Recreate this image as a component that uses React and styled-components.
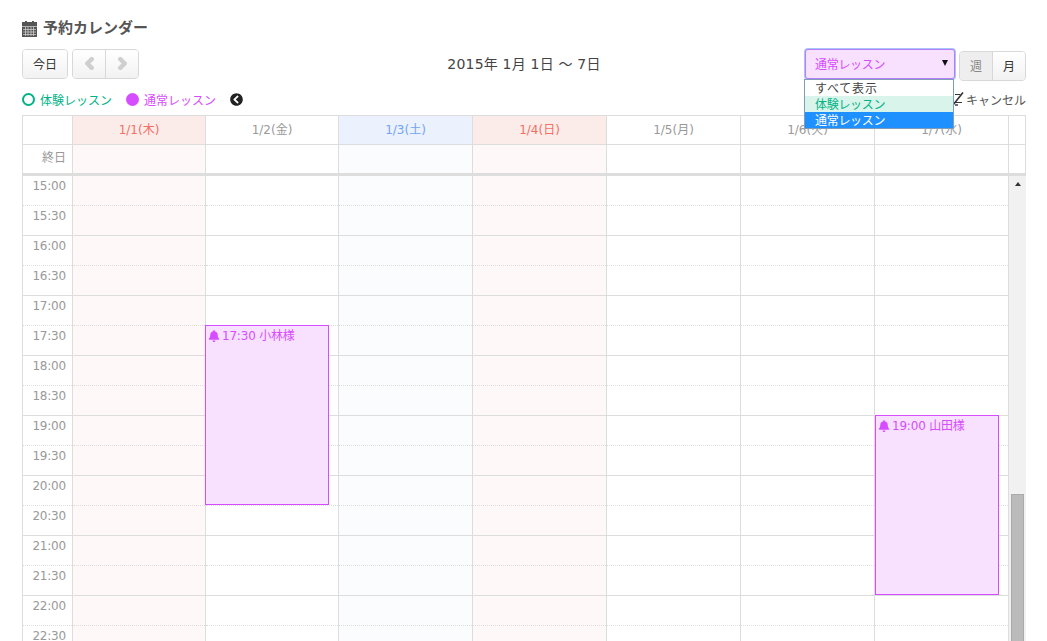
import React from 'react';
import styled, { createGlobalStyle } from 'styled-components';
import { FaBell, FaChevronCircleLeft, FaChevronLeft, FaChevronRight } from 'react-icons/fa';

const PURPLE = '#d64dff';
const GREEN = '#00b386';
const LINE = '#dddddd';

const GlobalStyle = createGlobalStyle`
  html, body {
    margin: 0;
    padding: 0;
    background: #fff;
  }
  body {
    font-family: 'DejaVu Sans', 'Noto Sans CJK JP', sans-serif;
    font-size: 12px;
    color: #444;
  }
`;

const Page = styled.div`
  height: 100vh;
  overflow: hidden;
  padding: 18px 21px 0 22px;
  box-sizing: border-box;
`;

const Title = styled.h1`
  display: flex;
  align-items: center;
  gap: 6px;
  margin: 0;
  height: 21px;
  font-size: 15px;
  line-height: 21px;
  font-weight: 700;
  color: #555;
`;

const Toolbar = styled.div`
  display: grid;
  grid-template-columns: 1fr auto 1fr;
  align-items: flex-start;
  height: 32px;
  margin-top: 10px;
`;

const ButtonRow = styled.div`
  display: flex;
  gap: 4px;
`;

const RightTools = styled(ButtonRow)`
  justify-content: flex-end;
`;

const ButtonGroup = styled.div`
  display: flex;
  margin-top: ${(p) => p.$top || 0}px;
  border: 1px solid #d8d8d8;
  border-radius: 4px;
  overflow: hidden;
`;

const Button = styled.div`
  display: flex;
  align-items: center;
  justify-content: center;
  box-sizing: border-box;
  width: ${(p) => p.$w}px;
  height: 28px;
  padding-bottom: 2px;
  font-size: 12px;
  color: ${(p) => (p.$active ? '#888' : '#333')};
  background: ${(p) => (p.$active ? '#eeeeee' : 'linear-gradient(#ffffff, #f2f2f2)')};
  & + & {
    border-left: 1px solid #d8d8d8;
  }
  svg {
    color: #cfcfcf;
    font-size: 13px;
    stroke: currentColor;
    stroke-width: 90;
  }
`;

const RangeLabel = styled.div`
  padding-top: 1px;
  font-size: 14px;
  line-height: 28px;
  letter-spacing: 0.2px;
  color: #444;
`;

const SelectWrap = styled.div`
  position: relative;
  width: 150px;
`;

const SelectBox = styled.div`
  display: flex;
  align-items: center;
  justify-content: space-between;
  box-sizing: border-box;
  height: 30px;
  padding: 0 6px 2px 9px;
  border: 1px solid #b47ff5;
  border-radius: 3px;
  box-shadow: 0 0 0 1px #a9c4fb;
  background: #f7e1ff;
  color: ${PURPLE};
  font-size: 12px;
  letter-spacing: -0.3px;
`;

const Caret = styled.span`
  width: 0;
  height: 0;
  border-left: 3.5px solid transparent;
  border-right: 3.5px solid transparent;
  border-top: 6px solid #111;
`;

const OptionList = styled.div`
  position: absolute;
  z-index: 5;
  top: 30px;
  left: -1px;
  width: 150px;
  box-sizing: border-box;
  border: 1px solid #7f9db9;
  background: #fff;
`;

const Option = styled.div`
  height: 16px;
  padding-left: 10px;
  font-size: 12px;
  line-height: 18px;
  overflow: hidden;
  letter-spacing: ${(p) => p.$tracking || '-0.3px'};
  color: ${(p) => p.$color};
  background: ${(p) => p.$bg};
`;

const LegendRow = styled.div`
  display: flex;
  align-items: center;
  height: 20px;
  margin-top: 8px;
  font-size: 12px;
`;

const LegendItem = styled.span`
  display: flex;
  align-items: center;
  gap: 5px;
  margin-right: 14px;
  color: ${(p) => p.$color};
`;

const Dot = styled.i`
  box-sizing: border-box;
  width: 13px;
  height: 13px;
  border-radius: 50%;
  border: ${(p) => (p.$filled ? 'none' : `2px solid ${p.$color}`)};
  background: ${(p) => (p.$filled ? p.$color : 'transparent')};
`;

const Collapse = styled.span`
  display: flex;
  font-size: 13px;
  color: #222;
`;

const CancelLabel = styled.span`
  display: flex;
  align-items: center;
  gap: 2px;
  margin-left: auto;
  color: #555;
`;

const Grid = styled.div`
  display: grid;
  grid-template-columns: 50px repeat(2, 133px) repeat(5, 134px) 18px;
  width: 1004px;
  box-sizing: border-box;
`;

const HeadGrid = styled(Grid)`
  margin-top: 6px;
  border-top: 1px solid ${LINE};
  border-bottom: 3px solid ${LINE};
`;

const tones = {
  red: { head: '#fbecea', body: '#fef9f8', text: '#f26f64' },
  blue: { head: '#ebf1fd', body: '#fbfcfe', text: '#72a4f2' },
  plain: { head: '#fff', body: '#fff', text: '#999' },
};

const HeadCell = styled.div`
  box-sizing: border-box;
  height: 28px;
  border-left: 1px solid ${LINE};
  border-right: ${(p) => (p.$last ? `1px solid ${LINE}` : '0')};
  background: ${(p) => tones[p.$tone].head};
  color: ${(p) => tones[p.$tone].text};
  font-size: 12px;
  line-height: 28px;
  text-align: center;
`;

const AllDayCell = styled.div`
  box-sizing: border-box;
  height: 29px;
  border-top: 1px solid ${LINE};
  border-left: 1px solid ${LINE};
  border-right: ${(p) => (p.$last ? `1px solid ${LINE}` : '0')};
  background: ${(p) => tones[p.$tone].body};
  color: #999;
  font-size: 12px;
  line-height: 26px;
  padding-right: ${(p) => (p.$label ? 6 : 0)}px;
  text-align: right;
`;

const TimeColumn = styled.div`
  border-left: 1px solid ${LINE};
`;

const DayColumn = styled.div`
  position: relative;
  border-left: 1px solid ${LINE};
  background: ${(p) => tones[p.$tone].body};
`;

const Slot = styled.div`
  box-sizing: border-box;
  height: 30px;
  border-bottom: 1px ${(p) => (p.$half ? 'dotted' : 'solid')} ${LINE};
`;

const TimeSlot = styled(Slot)`
  padding: 1px 6px 0 0;
  color: #999;
  font-size: 12px;
  line-height: 18px;
  letter-spacing: -0.2px;
  text-align: right;
`;

const Event = styled.div`
  position: absolute;
  z-index: 2;
  top: ${(p) => p.$top}px;
  left: ${(p) => p.$left}px;
  box-sizing: border-box;
  display: flex;
  align-items: flex-start;
  gap: 2px;
  width: 124px;
  height: 180px;
  padding: 1px 2px;
  border: 1px solid ${PURPLE};
  background: #f7e1ff;
  color: ${PURPLE};
  font-size: 12px;
  line-height: 18px;
  letter-spacing: -0.2px;
  svg {
    flex: none;
    margin-top: 3px;
    font-size: 12px;
  }
`;

const Scrollbar = styled.div`
  position: relative;
  border-left: 1px solid ${LINE};
  background: #f1f1f1;
`;

const ScrollArrow = styled.span`
  position: absolute;
  top: 6px;
  left: 6px;
  width: 0;
  height: 0;
  border-left: 3.5px solid transparent;
  border-right: 3.5px solid transparent;
  border-bottom: 4px solid #333;
`;

const ScrollThumb = styled.div`
  position: absolute;
  top: 318px;
  left: 2px;
  width: 13px;
  height: 400px;
  box-sizing: border-box;
  border: 1px solid #aaa;
  background: #bbb;
`;

const days = [
  { label: '1/1(木)', tone: 'red' },
  { label: '1/2(金)', tone: 'plain' },
  { label: '1/3(土)', tone: 'blue' },
  { label: '1/4(日)', tone: 'red' },
  { label: '1/5(月)', tone: 'plain' },
  { label: '1/6(火)', tone: 'plain' },
  { label: '1/7(水)', tone: 'plain' },
];

const events = {
  1: { top: 149, left: -1, text: '17:30 小林様' },
  6: { top: 239, left: 0, text: '19:00 山田様' },
};

const times = [];
for (let h = 15; h < 24; h += 1) {
  times.push(`${h}:00`, `${h}:30`);
}

const CalendarIcon = () => (
  <svg width="15" height="16" viewBox="0 0 15 16" aria-hidden="true">
    <rect x="0" y="1" width="15" height="15" fill="#555" />
    <rect x="3" y="0" width="2" height="3" fill="#555" />
    <rect x="10" y="0" width="2" height="3" fill="#555" />
    <path d="M0 5.5h15M1 8.5h13M1 11h13M1 13.5h13M3.5 6v9M6 6v9M9 6v9M11.5 6v9" stroke="#ccc" strokeWidth="0.8" fill="none" />
  </svg>
);

const CancelIcon = () => (
  <svg width="13" height="14" viewBox="0 0 13 14" aria-hidden="true" fill="none" stroke="#333">
    <path d="M12 0.5 L2 13" strokeWidth="1.6" />
    <path d="M4 2.5 H9.5 M3 10.5 H11" strokeWidth="1.2" />
    <path d="M4 13 H7" strokeWidth="1.4" />
  </svg>
);

const App = () => {
  return (
    <Page>
      <GlobalStyle />
      <Title>
        <CalendarIcon />
        予約カレンダー
      </Title>
      <Toolbar>
        <ButtonRow>
          <ButtonGroup>
            <Button $w={44}>今日</Button>
          </ButtonGroup>
          <ButtonGroup>
            <Button $w={32}>
              <FaChevronLeft />
            </Button>
            <Button $w={33}>
              <FaChevronRight />
            </Button>
          </ButtonGroup>
        </ButtonRow>
        <RangeLabel>2015年 1月 1日 〜 7日</RangeLabel>
        <RightTools>
          <SelectWrap>
            <SelectBox>
              通常レッスン
              <Caret />
            </SelectBox>
            <OptionList>
              <Option $color="#444" $bg="#fff" $tracking="0.8px">すべて表示</Option>
              <Option $color={GREEN} $bg="#d9f4ea">体験レッスン</Option>
              <Option $color="#fff" $bg="#1e90ff">通常レッスン</Option>
            </OptionList>
          </SelectWrap>
          <ButtonGroup $top={2}>
            <Button $w={32} $active>週</Button>
            <Button $w={33}>月</Button>
          </ButtonGroup>
        </RightTools>
      </Toolbar>
      <LegendRow>
        <LegendItem $color={GREEN}>
          <Dot $color={GREEN} />
          体験レッスン
        </LegendItem>
        <LegendItem $color={PURPLE}>
          <Dot $color={PURPLE} $filled />
          通常レッスン
        </LegendItem>
        <Collapse>
          <FaChevronCircleLeft />
        </Collapse>
        <CancelLabel>
          <CancelIcon />
          キャンセル
        </CancelLabel>
      </LegendRow>
      <HeadGrid>
        <HeadCell $tone="plain" />
        {days.map((d) => (
          <HeadCell key={d.label} $tone={d.tone}>{d.label}</HeadCell>
        ))}
        <HeadCell $tone="plain" $last />
        <AllDayCell $tone="plain" $label>終日</AllDayCell>
        {days.map((d) => (
          <AllDayCell key={d.label} $tone={d.tone} />
        ))}
        <AllDayCell $tone="plain" $last />
      </HeadGrid>
      <Grid>
        <TimeColumn>
          {times.map((t, i) => (
            <TimeSlot key={t} $half={i % 2 === 0}>{t}</TimeSlot>
          ))}
        </TimeColumn>
        {days.map((d, col) => (
          <DayColumn key={d.label} $tone={d.tone}>
            {times.map((t, i) => (
              <Slot key={t} $half={i % 2 === 0} />
            ))}
            {events[col] && (
              <Event $top={events[col].top} $left={events[col].left}>
                <FaBell />
                {events[col].text}
              </Event>
            )}
          </DayColumn>
        ))}
        <Scrollbar>
          <ScrollArrow />
          <ScrollThumb />
        </Scrollbar>
      </Grid>
    </Page>
  );
};

export default App;
